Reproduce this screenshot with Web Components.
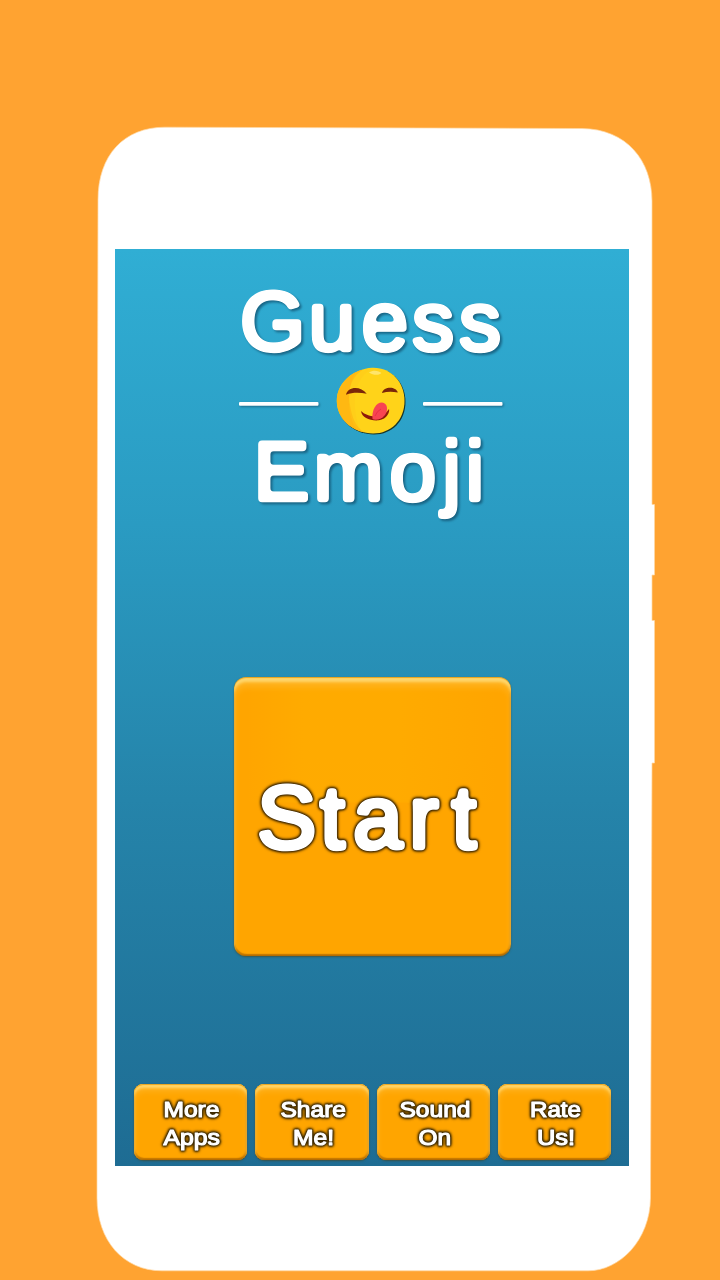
<!DOCTYPE html>
<html lang="en">
<head>
<meta charset="utf-8">
<title>Guess Emoji</title>
<style>
html,body{margin:0;height:100%;background:#ffa331;overflow:hidden;font-family:"Liberation Sans",Arial,sans-serif}
</style>
</head>
<body>
<phone-frame>
  <game-screen>
    <game-title></game-title>
    <game-button slot="main" kind="big" lines="Start,23 86 119 175 217.5,0"></game-button>
    <game-button slot="nav" lines="More,29.500,56|Apps,29.5,56.500"></game-button>
    <game-button slot="nav" lines="Share,25.500,65.500|Me!,38,41"></game-button>
    <game-button slot="nav" lines="Sound,22.500,71|On,41.5,32.500"></game-button>
    <game-button slot="nav" lines="Rate,32,51|Us!,39,38"></game-button>
  </game-screen>
</phone-frame>
<script>
/* Blur followed by an alpha threshold: rounds the corners of the lettering. */
const roundFilter = r => `<filter id="round" x="-10%" y="-20%" width="120%" height="140%" color-interpolation-filters="sRGB">
  <feGaussianBlur in="SourceAlpha" stdDeviation="${r}"/>
  <feComponentTransfer result="a"><feFuncA type="linear" slope="${r*2.4}" intercept="${-(r*2.4-1)/2}"/></feComponentTransfer>
  <feFlood flood-color="#fff"/><feComposite operator="in" in2="a"/></filter>`;

class PhoneFrame extends HTMLElement{
  constructor(){
    super();
    this.attachShadow({mode:'open'}).innerHTML=`
    <style>
      :host{display:grid;width:720px;height:1280px}
      svg,.body{grid-area:1/1}
      .body{padding:249px 91px 114px 115px;display:grid}
    </style>
    <svg width="720" height="1280" viewBox="0 0 720 1280">
      <path fill="#fff" stroke="#ffd9a5" stroke-width=".7" d="M165 127.2L582 128.5C627 129 652 161 652 201V504.500H654.500V575H652V620.500H654.500V763H652L650.500 1198C650 1240 620 1270.800 588 1270.800H162C123 1270.800 97 1240 97 1198V640L98 200C98 155 124 127.200 165 127.200Z"/>
    </svg>
    <div class="body"><slot></slot></div>`;
  }
}
customElements.define('phone-frame',PhoneFrame);

class GameScreen extends HTMLElement{
  constructor(){
    super();
    this.attachShadow({mode:'open'}).innerHTML=`
    <style>
      :host{display:flex;flex-direction:column;align-items:center;width:514px;height:917px;background:linear-gradient(#30aed4,#2a9bc2 30%,#2584aa 60%,#1e6c93)}
      .main{display:flex;margin:128px 0 128px;padding-left:1px}
      .nav{display:flex;gap:8px;padding-left:1px}
    </style>
    <slot></slot>
    <div class="main"><slot name="main"></slot></div>
    <div class="nav"><slot name="nav"></slot></div>`;
  }
}
customElements.define('game-screen',GameScreen);

class GameTitle extends HTMLElement{
  constructor(){
    super();
    this.attachShadow({mode:'open'}).innerHTML=`
    <style>
      :host{display:block;width:514px;height:300px;flex:none}
      svg{display:block;overflow:visible}
      .words{filter:drop-shadow(2px 2px 1px #124f6dbb)}
      .words g{font:84px "Liberation Sans",Arial,sans-serif;fill:#fff;stroke:#fff;stroke-width:4.300;stroke-linejoin:round;stroke-linecap:round}
    </style>
    <svg width="514" height="300" viewBox="115 249 514 300">
      <defs>${roundFilter(1.8)}</defs>
      <g class="words"><g filter="url(#round)">
        <text x="240 308.500 361.500 412 459" y="349.500">Guess</text>
        <text x="253.500 313.500 389.500 442.300 465.500" y="500">Emoji</text>
      </g></g>
      <g fill="#fff" style="filter:drop-shadow(1.500px 1.500px 1px #124f6dbb)">
        <rect x="239" y="402" width="79.500" height="3.700" rx="1"/>
        <rect x="423" y="402" width="79.500" height="3.700" rx="1"/>
      </g>
      <g style="filter:drop-shadow(1.200px 1.200px .7px #17352c)">
        <path fill="#ffd319" d="M372 367.800C391 367 404.500 382 404.500 401C404.500 420 391 433.500 373 433.500C354 433.500 336.800 419 336.800 401C336.800 382 354 369 372 367.800Z"/>
        <path fill="#ffb812" d="M363 369.500C350 378 348 391 350 405C352 418 356 427 364 432.300C348 429 336.800 416 336.800 401C336.800 386 348 373.500 363 369.500Z"/>
        <path fill="#ffc71a" d="M371 369C355 380 350 399 360 432C347 423 345 387 356 372.500Z" opacity=".4"/>
        <path fill="#ffe56b" d="M369 372.500C373 369.500 379 370.500 381.500 373C378 376 373 375 369 372.500Z"/>
        <path fill="#7b2608" d="M346 394.800C347.500 386 361 385.500 366.700 393.800C360 392.500 353 392 346 394.800ZM382 393C383.500 386.300 396 386 397.800 392.500C392 391.500 387 391.500 382 393Z"/>
        <path fill="#8d180b" d="M361 411C367 417 382 420 389 409C390 412 387 419 379 420.300C370 421 362 418 361 411Z"/>
        <path fill="#f84452" d="M372.500 419C371.500 410 376 402.500 382 402.500C387.500 403 388.500 410 385 415C381 420 375 420.500 372.500 419Z"/>
        <path d="M375 416Q377 411 381 409" fill="none" stroke="#e93147" stroke-width="1"/>
      </g>
    </svg>`;
  }
}
customElements.define('game-title',GameTitle);

class GameButton extends HTMLElement{
  constructor(){
    super();
    const big=this.getAttribute('kind')==='big';
    const w=big?277:113.4,h=big?278.500:76.500;
    const texts=this.getAttribute('lines').split('|').map((l,i)=>{
      const [t,x,len]=l.split(',');
      const fit=+len?`textLength="${len}" lengthAdjust="spacingAndGlyphs"`:'';
      return `<text x="${x}" y="${big?170.500:33.300+27.300*i}" ${fit}>${t}</text>`;
    }).join('');
    this.attachShadow({mode:'open'}).innerHTML=`
    <style>
      :host{display:block;box-sizing:border-box;width:${w}px;height:${h}px;border-radius:${big?12:9}px;cursor:pointer;
        background:${big
          ?'linear-gradient(90deg,transparent 5%,#ffb00080 25%,#ffb00080 60%,transparent 95%) 0 0/100% 45% no-repeat,#ffa500'
          :'#ffa500'};
        box-shadow:inset 0 1px 1px #e8a21c,inset 0 ${big?5:4}px 3px #ffe07fcc,inset 0 ${big?10:7}px 6px #ffb321,inset 1px -2px 1px #b26b00aa,inset -1px -1px 2px #a86200,0 1px 2px #573b0088}
      svg{display:block;overflow:visible}
      text{font:${big?89:22}px "Liberation Sans",Arial,sans-serif;fill:#fff;stroke-linejoin:round;stroke-linecap:round;stroke:#fff;stroke-width:${big?4.600:1.200}}
      .outline{filter:${big
        ?'drop-shadow(0 0 .8px #3c2600) drop-shadow(0 0 .8px #3c2600) drop-shadow(0 0 .8px #4c3000)'
        :'drop-shadow(0 0 .8px #382600) drop-shadow(.3px .3px .8px #382600) drop-shadow(0 0 .8px #382600)'}}
    </style>
    <svg width="${w}" height="${h}" viewBox="0 0 ${w} ${h}">
      <defs>${roundFilter(1.8)}</defs>
      <g class="outline"><g ${big?'filter="url(#round)"':''}>${texts}</g></g>
    </svg>`;
  }
}
customElements.define('game-button',GameButton);
</script>
</body>
</html>
